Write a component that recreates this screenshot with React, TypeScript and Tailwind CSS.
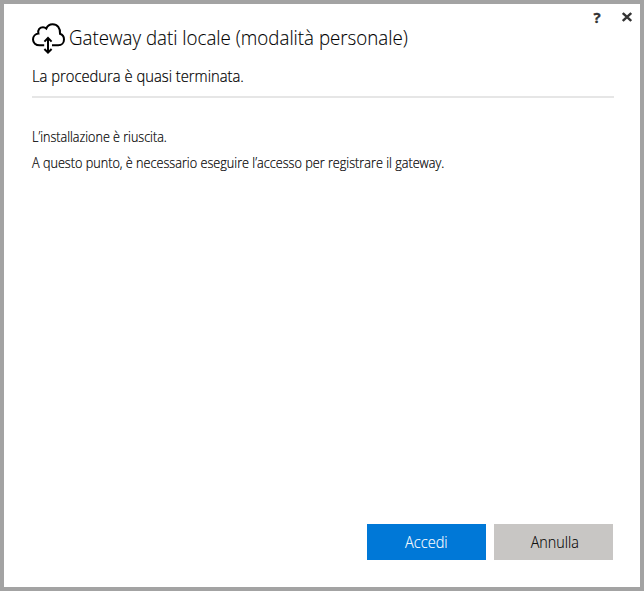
function CloudSyncIcon() {
  return (
    <svg width="34" height="32" viewBox="0 0 34 32" fill="none" stroke="#000" strokeWidth="2" className="shrink-0">
      <path d="M12.2 22.3H7.6C3.8 22.3 1 19.8 1 16.5C1 13.2 3.5 10.9 6.4 10.6C5.4 6.8 8 4.2 11 4.2C12.3 4.2 13.4 4.6 14.3 5.5C15.4 2.8 17.8 1.2 20.6 1.2C25.4 1.2 28.5 5 28 10.7C30.5 11.5 32 13.7 32 16.4C32 19.8 29.7 22.3 26.2 22.3H20" />
      <path d="M16 15.4V29.2M12.4 18.6L16 15L19.6 18.6M12.4 26L16 29.6L19.6 26" />
    </svg>
  );
}

export default function App() {
  return (
    <div className="flex h-[591px] w-[644px] flex-col border-4 border-[#a3a3a3] bg-white font-['Open_Sans',sans-serif] font-light text-black">
      <header className="flex h-[94px] flex-col pl-7 pr-[8px]">
        <div className="flex h-[50px] justify-between">
          <div className="flex items-start pt-[19px]">
            <CloudSyncIcon />
            <h1 className="ml-[3px] mt-px origin-left scale-x-[0.936] whitespace-nowrap text-[20px] leading-[28px] [-webkit-text-stroke:0.1px]">
              Gateway dati locale (modalità personale)
            </h1>
          </div>
          <div className="flex items-start gap-[20px] pt-[3px] text-[#333]">
            <button className="w-[10px] text-center text-[15px] font-bold leading-5 [-webkit-text-stroke:0.3px]">?</button>
            <button aria-label="Chiudi" className="pt-[5px]">
              <svg width="10" height="10" viewBox="0 0 10 10" stroke="currentColor" strokeWidth="2.4">
                <path d="M.8 1L9.2 9M9.2 1L.8 9" />
              </svg>
            </button>
          </div>
        </div>
        <p className="mt-[10px] w-max origin-left scale-x-[0.923] whitespace-nowrap text-[16px] leading-6 [-webkit-text-stroke:0.2px]">
          La procedura è quasi terminata.
        </p>
      </header>
      <main className="ml-7 mr-[26px] flex-1 -mt-[2px] border-t-2 border-[#e6e6e6] pt-[26px] text-[14px] leading-[26px] [-webkit-text-stroke:0.2px]">
        <p className="w-max origin-left scale-x-[0.896] whitespace-nowrap">L’installazione è riuscita.</p>
        <p className="w-max origin-left scale-x-[0.904] whitespace-nowrap">
          A questo punto, è necessario eseguire l’accesso per registrare il gateway.
        </p>
      </main>
      <footer className="mb-[27px] mr-[27px] flex justify-end gap-2 text-[16px] [-webkit-text-stroke:0.1px]">
        <button className="h-9 w-[119px] bg-[#0078d7] text-white">
          <span className="inline-block scale-x-[0.91]">Accedi</span>
        </button>
        <button className="h-9 w-[119px] bg-[#c8c6c4] pl-[2px]">
          <span className="inline-block scale-x-[0.9]">Annulla</span>
        </button>
      </footer>
    </div>
  );
}
